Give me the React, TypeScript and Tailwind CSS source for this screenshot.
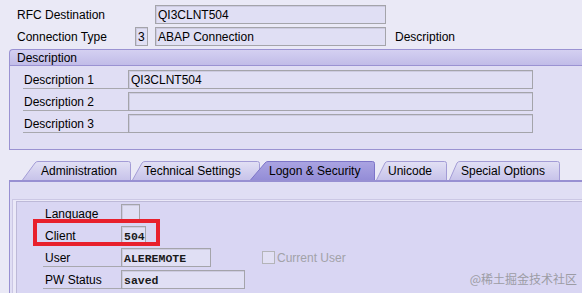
import React from "react";

const sans = "font-[family-name:'Liberation_Sans',Arial,sans-serif]";
const mono = "font-[family-name:'Liberation_Mono','Courier_New',monospace]";
const field =
  "box-border h-[19px] border border-[#a4a4aa] bg-[#e0dff4] shadow-[inset_1px_1px_0_#cdcbe0]";

function Field({ w, text, monoText }: { w: number; text?: string; monoText?: boolean }) {
  return (
    <div className={field} style={{ width: w }}>
      {text ? (
        monoText ? (
          <div className={`${mono} pl-[2px] pt-[1px] text-[11.5px] font-bold leading-[17px] text-[#1a1a1a]`}>{text}</div>
        ) : (
          <div className="pl-[2px] pt-[2px] text-[12px] leading-[15px] text-black">{text}</div>
        )
      ) : null}
    </div>
  );
}

function Tab({
  w,
  s,
  label,
  pl,
  active,
  className,
}: {
  w: number;
  s: number;
  label: string;
  pl: number;
  active?: boolean;
  className: string;
}) {
  const id = active ? "gA" : "gI";
  return (
    <div className={`relative h-[19px] shrink-0 ${className}`} style={{ width: w }}>
      <svg className="absolute inset-0" width={w} height={19} viewBox={`0 0 ${w} 19`}>
        <defs>
          <linearGradient id="gI" x1="0" y1="0" x2="0" y2="1">
            <stop offset="0" stopColor="#e2e0f4" />
            <stop offset="1" stopColor="#c7c3ea" />
          </linearGradient>
          <linearGradient id="gA" x1="0" y1="0" x2="0" y2="1">
            <stop offset="0" stopColor="#aaa4e2" />
            <stop offset="1" stopColor="#948dd7" />
          </linearGradient>
        </defs>
        <path
          d={`M0.5,19 L${s},2 Q${s + 1},0.5 ${s + 3},0.5 L${w - 2.5},0.5 Q${w - 0.5},0.5 ${w - 0.5},2.5 L${w - 0.5},19`}
          fill={`url(#${id})`}
          stroke={active ? "#7d75c8" : "#a39cd6"}
          strokeWidth={1}
        />
      </svg>
      <div className="relative pt-[3px] text-[12px] leading-[15px] text-black" style={{ paddingLeft: pl }}>
        {label}
      </div>
    </div>
  );
}

export default function App() {
  const label = "pt-[2px] text-[12px] leading-[17px] text-black h-[19px]";
  return (
    <div className={`${sans} relative h-[293px] w-[582px] overflow-hidden bg-[#eae9f6]`}>
      {/* Top rows */}
      <div className="flex flex-col gap-[3px] pt-[5px]">
        <div className="flex items-start">
          <div className={`${label} w-[155px] pl-[17px]`}>RFC Destination</div>
          <Field w={231} text="QI3CLNT504" />
        </div>
        <div className="flex items-start">
          <div className={`${label} w-[135px] pl-[17px]`}>Connection Type</div>
          <div className={`${field} w-[13px]`}>
            <div className="pl-[2px] pt-[2px] text-[12px] leading-[15px]">3</div>
          </div>
          <div className="w-[7px]" />
          <Field w={231} text="ABAP Connection" />
          <div className={`${label} pl-[9px]`}>Description</div>
        </div>
      </div>

      {/* Description group */}
      <div className="ml-[9px] mt-[3px]">
        <div className="box-border h-[17px] rounded-tl-[4px] border-l border-t border-b border-[#9a92d2] bg-gradient-to-b from-[#d4d0f1] to-[#c1bce8] pl-[7px] pt-[1px] text-[12px] leading-[15px] text-black">
          Description
        </div>
        <div className="box-border flex h-[84px] flex-col gap-[3px] border-b border-l border-[#9a92d2] bg-[#e0def4] pt-[4px]">
          {["Description 1", "Description 2", "Description 3"].map((d, i) => (
            <div key={d} className="flex items-start">
              <div className="ml-[13px] box-border h-[19px] w-[105px] border-b border-[#a8a8ae] pl-[1px] pt-[2px] text-[12px] leading-[16px] text-black">
                {d}
              </div>
              <Field w={405} text={i === 0 ? "QI3CLNT504" : undefined} />
            </div>
          ))}
        </div>
      </div>

      {/* Tabs */}
      <div className="mt-[11px] flex items-end pl-[22px]">
        <Tab w={109} s={13} label="Administration" pl={19} className="" />
        <Tab w={128} s={10} label="Technical Settings" pl={12} className="ml-[1px]" />
        <Tab w={125} s={15} label="Logon & Security" pl={19} active className="z-10 -ml-[10px]" />
        <Tab w={71} s={9} label="Unicode" pl={12} className="ml-[1px]" />
        <Tab w={111} s={8} label="Special Options" pl={12} className="ml-[2px]" />
      </div>

      {/* Panel */}
      <div className="ml-[9px] h-[200px] border-l border-t-2 border-[#9890d2] bg-[#e0def4]">
        <div className="h-[17px]" />
        <div className="ml-[2px] h-full border-l border-t border-[#cbc7e4] bg-[#ebe9f8] pl-[3px] pt-[1px]">
          <div className="h-full border-l border-t border-[#bdb9d8] bg-[#d9d6f3] pt-[2px]">
            <div className="flex flex-col gap-[3px]">
              <div className="flex items-start">
                <div className="ml-[26px] box-border h-[19px] w-[78px] pl-[2px] pt-[2px] text-[12px] leading-[16px] text-black">
                  Language
                </div>
                <Field w={19} />
              </div>
              <div className="flex items-start">
                <div className="ml-[26px] box-border h-[19px] w-[78px] border-b border-[#a8a8ae] pl-[2px] pt-[2px] text-[12px] leading-[16px] text-black">
                  Client
                </div>
                <Field w={25} text="504" monoText />
              </div>
              <div className="flex items-start">
                <div className="ml-[26px] box-border h-[19px] w-[78px] border-b border-[#a8a8ae] pl-[2px] pt-[2px] text-[12px] leading-[16px] text-black">
                  User
                </div>
                <Field w={90} text="ALEREMOTE" monoText />
                <div className="ml-[51px] mt-[3px] box-border h-[13px] w-[13px] border border-[#b4b4b8] bg-[#e2e0f4]" />
                <div className="pl-[2px] pt-[2px] text-[12px] leading-[17px] text-[#a2a2a8]">Current User</div>
              </div>
              <div className="flex items-start">
                <div className="ml-[26px] box-border h-[19px] w-[78px] border-b border-[#a8a8ae] pl-[2px] pt-[2px] text-[12px] leading-[16px] text-black">
                  PW Status
                </div>
                <Field w={124} text="saved" monoText />
              </div>
            </div>
          </div>
        </div>
      </div>

      {/* Red highlight overlay */}
      <div className="absolute left-[33px] top-[219px] h-[27px] w-[127px] border-4 border-[#e8202c]" />

      {/* Watermark */}
      <div className="absolute right-[5px] top-[270px] font-[family-name:'Noto_Sans_CJK_SC',sans-serif] text-[12px] leading-[17px] text-[#9c9ca4]">
        @稀土掘金技术社区
      </div>
    </div>
  );
}
